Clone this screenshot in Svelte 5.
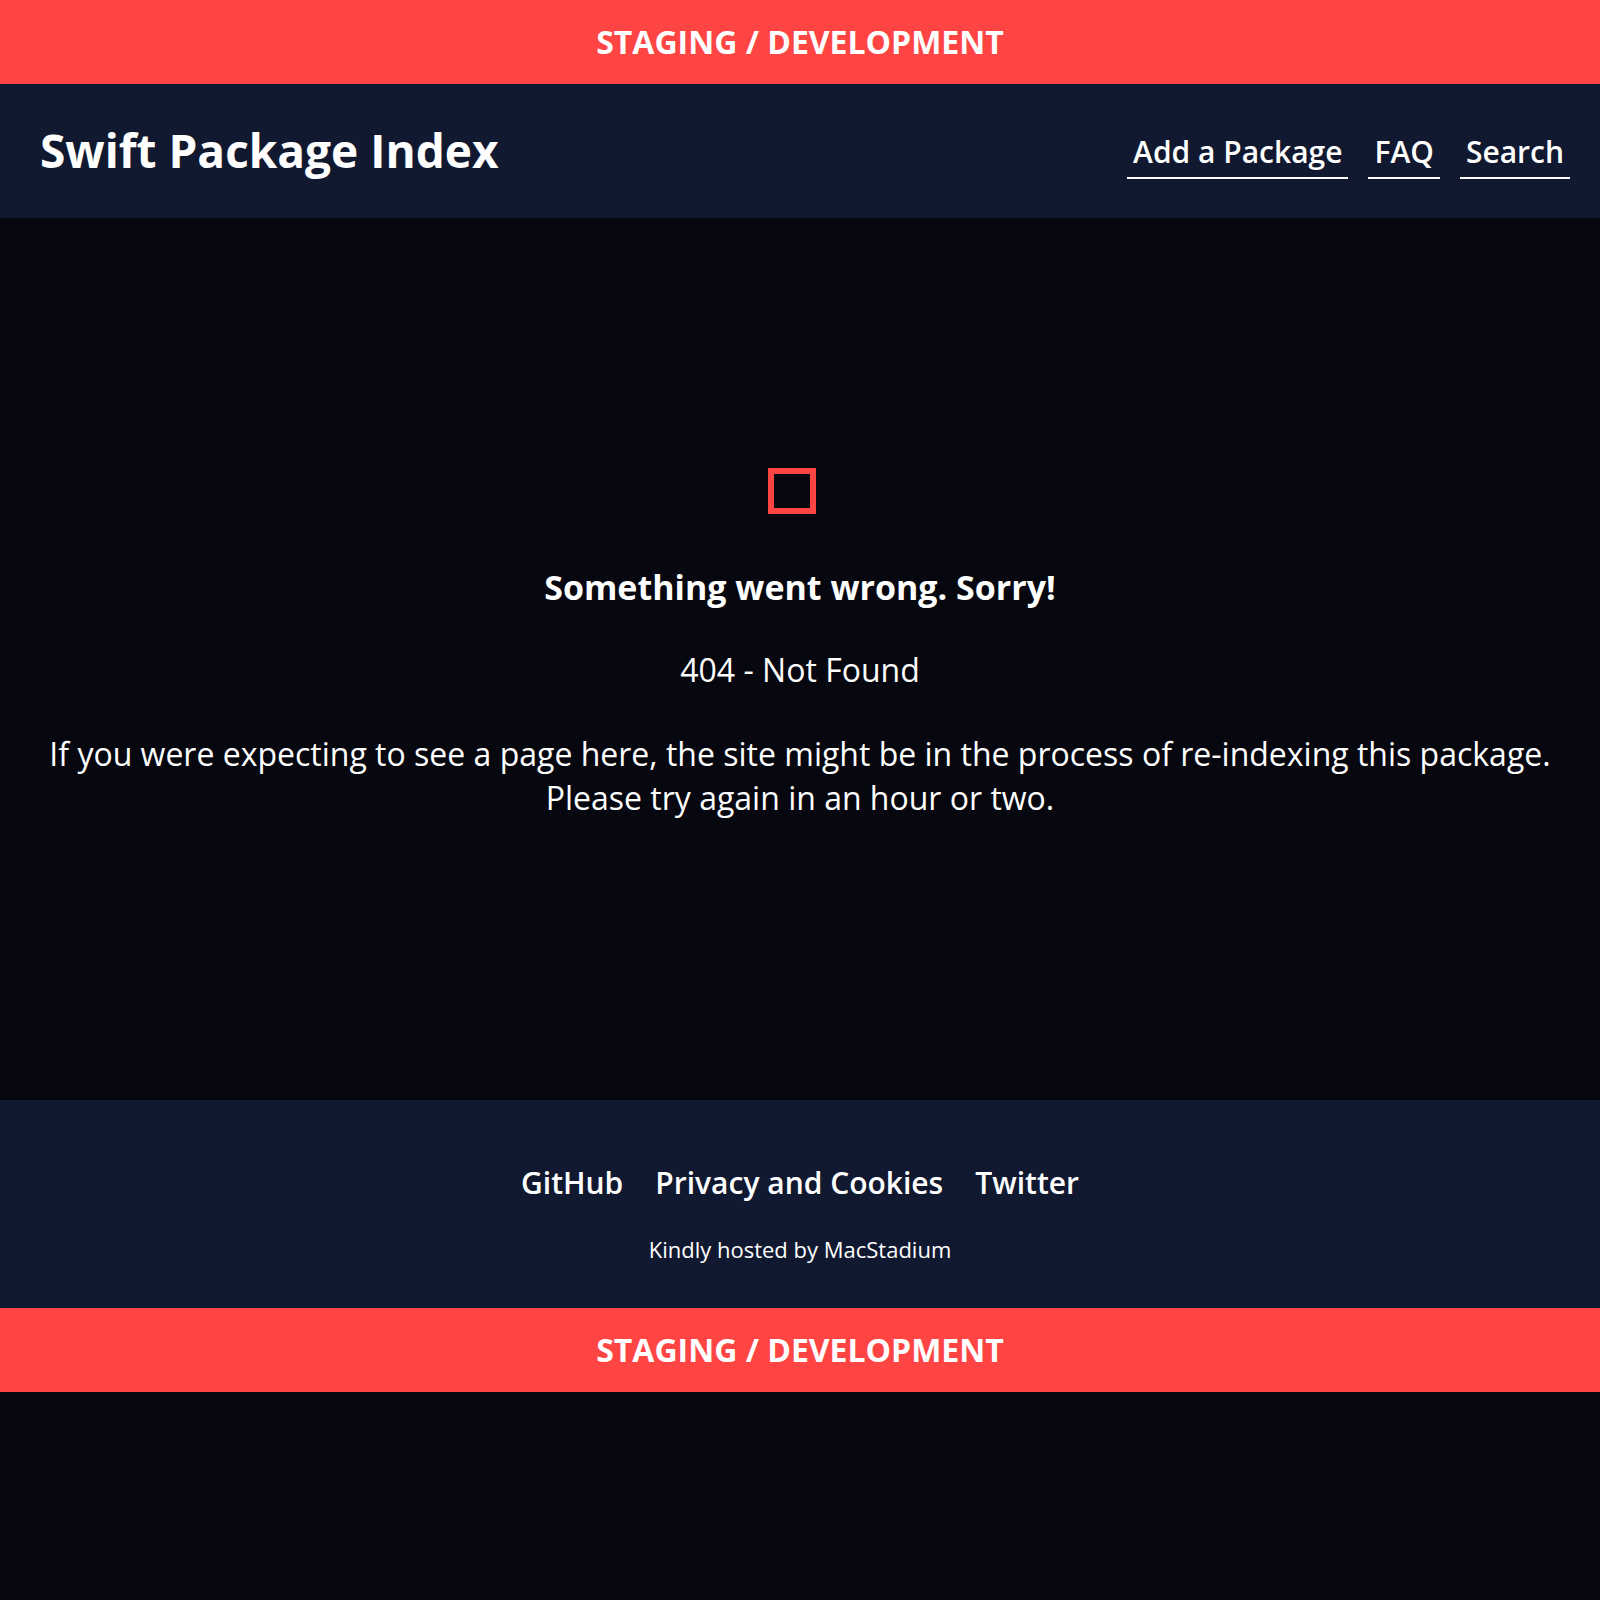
<script>
  const navLinks = ['Add a Package', 'FAQ', 'Search'];
  const footerLinks = ['GitHub', 'Privacy and Cookies', 'Twitter'];
</script>

<div class="banner">STAGING / DEVELOPMENT</div>
<header>
  <h1><a href="/">Swift Package Index</a></h1>
  <nav>
    {#each navLinks as link}
      <a href="#{link}">{link}</a>
    {/each}
  </nav>
</header>
<main>
  <svg class="mark" viewBox="0 0 48 46" aria-hidden="true">
    <rect x="3" y="3" width="42" height="40" />
  </svg>
  <h2>Something went wrong. Sorry!</h2>
  <p>404 - Not Found</p>
  <p>If you were expecting to see a page here, the site might be in the process of re-indexing this package. Please try again in an hour or two.</p>
</main>
<footer>
  <nav>
    {#each footerLinks as link}
      <a href="#{link}">{link}</a>
    {/each}
  </nav>
  <small>Kindly hosted by <a href="#MacStadium">MacStadium</a></small>
</footer>
<div class="banner">STAGING / DEVELOPMENT</div>

<style>
  :global(body) {
    margin: 0;
    background: #06070f;
    color: #fff;
    font: 32px/44px 'Open Sans', sans-serif;
  }
  a {
    color: inherit;
    text-decoration: none;
  }
  .banner {
    padding: 20px;
    background: #ff4444;
    font-weight: 700;
    text-align: center;
  }
  header {
    display: flex;
    align-items: center;
    justify-content: space-between;
    padding: 34px 30px 34px 40px;
    background: #111930;
  }
  h1 {
    margin: 0;
    padding-bottom: 2px;
    font-size: 46px;
    line-height: 64px;
  }
  header nav {
    display: flex;
    gap: 20px;
    font-size: 30px;
    font-weight: 600;
  }
  header nav a {
    padding: 7px 6px 3px;
    border-bottom: 2px solid #fff;
  }
  main {
    padding: 250px 40px 280px;
    text-align: center;
  }
  .mark {
    display: block;
    width: 48px;
    height: 46px;
    margin: 0 auto;
    padding-right: 16px;
    fill: none;
    stroke: #ff4444;
    stroke-width: 6;
  }
  h2 {
    margin: 52px 0 40px;
    font-size: 34px;
    line-height: 42px;
  }
  p {
    margin: 0 0 40px;
  }
  p:last-child {
    margin: 0;
  }
  footer {
    display: flex;
    flex-direction: column;
    align-items: center;
    gap: 28px;
    padding: 61px 40px 43px;
    background: #111930;
  }
  footer nav {
    display: flex;
    gap: 32px;
    font-size: 30px;
    font-weight: 600;
  }
  small {
    font-size: 22px;
    line-height: 32px;
  }
</style>
